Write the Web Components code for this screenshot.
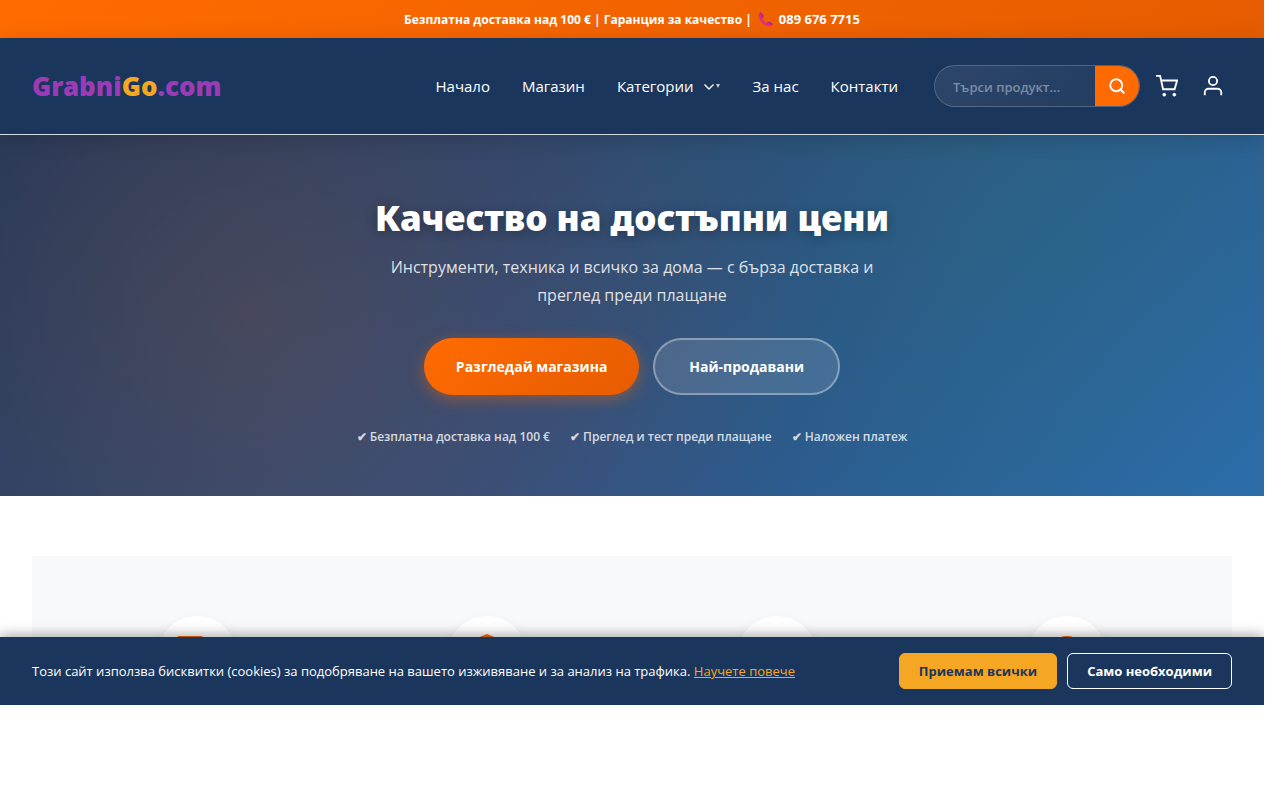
<!DOCTYPE html>
<html lang="bg">
<head>
<meta charset="UTF-8">
<meta name="viewport" content="width=device-width, initial-scale=1.0">
<title>GrabniGo.com</title>
<style>
    :root {
        --navy: #1b365d;
        --orange: #ff6b00;
        --orange-dark: #e65c00;
        --gold: #f5a623;
        --purple: #9b3bb5;
    }

    body {
        margin: 0 16px 0 0;
        background: #fff;
        color: #fff;
        font-family: "Open Sans", "Noto Sans", sans-serif;
        font-size: 15px;
    }
</style>
</head>
<body>

<top-bar>Безплатна доставка над 100 € | Гаранция за качество |</top-bar>

<site-header>
    <nav-link href="#home">Начало</nav-link>
    <nav-link href="#shop">Магазин</nav-link>
    <nav-link href="#categories" dropdown>Категории</nav-link>
    <nav-link href="#about">За нас</nav-link>
    <nav-link href="#contacts">Контакти</nav-link>
</site-header>

<main>
    <hero-banner>
        <span slot="title">Качество на достъпни цени</span>
        <span slot="text">Инструменти, техника и всичко за дома — с бърза доставка и преглед преди плащане</span>
        <hero-button slot="actions" primary>Разгледай магазина</hero-button>
        <hero-button slot="actions">Най-продавани</hero-button>
        <trust-item slot="trust">Безплатна доставка над 100 €</trust-item>
        <trust-item slot="trust">Преглед и тест преди плащане</trust-item>
        <trust-item slot="trust">Наложен платеж</trust-item>
    </hero-banner>

    <feature-list>
        <feature-icon name="truck"></feature-icon>
        <feature-icon name="shield"></feature-icon>
        <feature-icon name="card"></feature-icon>
        <feature-icon name="headset"></feature-icon>
    </feature-list>
</main>

<cookie-banner>Този сайт използва бисквитки (cookies) за подобряване на вашето изживяване и за анализ на трафика.</cookie-banner>

<script>
class TopBar extends HTMLElement {

    constructor() {
        super();
        this.attachShadow({ mode: 'open' }).innerHTML = `
            <style>
                :host {
                    display: flex;
                    justify-content: center;
                    align-items: center;
                    gap: 6px;
                    height: 38px;
                    background: linear-gradient(135deg, var(--orange), var(--orange-dark));
                    font-size: 12px;
                    font-weight: 700;
                }

                a {
                    display: flex;
                    align-items: center;
                    gap: 6px;
                    color: inherit;
                    font-size: 13px;
                    text-decoration: none;
                }

                svg {
                    width: 15px;
                    height: 15px;
                }
            </style>

            <span><slot></slot></span>
            <a href="tel:0896767715">
                <svg viewBox="0 0 16 16" aria-hidden="true">
                    <path d="M1.500 1C.2 3 .6 6.500 3 9.800c2.600 3.600 6.200 5.600 9.400 5.400 1.700-.1 2.900-1.100 3.200-2.400l-3-2.300-2.600.4-.8 1C7.500 11 5.500 8.800 4.600 6.800l1-.9.1-2.500L2.800.6z" fill="#d92f8a"/>
                    <path d="M1.500 1 2.800.6l2.900 2.800-.1 2.500-1 .9-1-.8.300-2zM9.200 11.900l.8-1 2.600-.4 3 2.300-.6 1.200-2.800-1.700z" fill="#b5267b"/>
                </svg>
                089 676 7715
            </a>
        `;
    }
}

class NavLink extends HTMLElement {

    constructor() {
        super();
        this.attachShadow({ mode: 'open' });
    }

    connectedCallback() {
        const arrow = this.hasAttribute('dropdown') ? `
            <svg viewBox="0 0 18 12" aria-hidden="true">
                <path d="M1.500 4.500 6 9l4.500-4.500" fill="none" stroke="#fff" stroke-width="1.400"/>
                <path d="M13 4h4l-2 4z" fill="#c3cbd6"/>
            </svg>` : '';

        this.shadowRoot.innerHTML = `
            <style>
                :host {
                    display: block;
                }

                a {
                    display: flex;
                    align-items: center;
                    gap: 9px;
                    color: #fff;
                    text-decoration: none;
                    white-space: nowrap;
                }

                svg {
                    width: 18px;
                    height: 12px;
                }
            </style>

            <a href="${this.getAttribute('href')}"><slot></slot>${arrow}</a>
        `;
    }
}

class SearchBox extends HTMLElement {

    constructor() {
        super();
        this.attachShadow({ mode: 'open' }).innerHTML = `
            <style>
                :host {
                    display: block;
                }

                form {
                    display: flex;
                    box-sizing: border-box;
                    width: 206px;
                    height: 42px;
                    margin: 0;
                    overflow: hidden;
                    border: 1px solid rgba(255,255,255,.2);
                    border-radius: 21px;
                    background: linear-gradient(135deg, rgba(255,255,255,.08), rgba(255,255,255,.03));
                }

                input {
                    flex: 1;
                    min-width: 0;
                    padding: 2px 0 0 18px;
                    border: 0;
                    outline: 0;
                    background: none;
                    color: #fff;
                    font: 600 13px "Open Sans", "Noto Sans", sans-serif;
                }

                input::placeholder {
                    color: #7c8da7;
                    opacity: 1;
                }

                button {
                    display: flex;
                    align-items: center;
                    justify-content: center;
                    width: 44px;
                    padding: 0;
                    border: 0;
                    background: var(--orange);
                    color: #fff;
                }
            </style>

            <form role="search">
                <input type="search" placeholder="Търси продукт..." aria-label="Търси продукт">
                <button type="button" aria-label="Търси">
                    <svg width="18" height="18" viewBox="0 0 24 24" fill="none" stroke="currentColor" stroke-width="2.500" stroke-linecap="round">
                        <circle cx="11" cy="11" r="8"/>
                        <path d="m21 21-4.300-4.300"/>
                    </svg>
                </button>
            </form>
        `;
    }
}

class SiteHeader extends HTMLElement {

    constructor() {
        super();
        this.attachShadow({ mode: 'open' }).innerHTML = `
            <style>
                :host {
                    display: block;
                    position: relative;
                    z-index: 1;
                    background: var(--navy);
                    border-bottom: 1px solid #d5d9e0;
                    box-shadow: 0 4px 20px rgba(0,0,0,.15);
                }

                header {
                    display: flex;
                    align-items: center;
                    height: 96px;
                    padding: 0 40px 0 32px;
                }

                .logo {
                    margin-right: auto;
                    color: var(--purple);
                    font-family: "Noto Sans", "Open Sans", sans-serif;
                    font-size: 26px;
                    font-weight: 900;
                    text-decoration: none;
                }

                .logo span {
                    color: var(--gold);
                }

                nav {
                    display: flex;
                    gap: 32px;
                    margin-right: 36px;
                }

                .icon {
                    display: flex;
                    margin-left: 16px;
                    color: #fff;
                }

                .icon + .icon {
                    margin-left: 24px;
                }
            </style>

            <header>
                <a class="logo" href="#home">Grabni<span>Go</span>.com</a>
                <nav><slot></slot></nav>
                <search-box></search-box>
                <a class="icon" href="#cart" aria-label="Количка">
                    <svg width="22" height="22" viewBox="0 0 24 24" fill="none" stroke="currentColor" stroke-width="2">
                        <path d="M0 1h4.500l3.200 14.500h12.600L23 6H6"/>
                        <circle cx="9" cy="21.500" r="1.500" fill="currentColor" stroke-width="1"/>
                        <circle cx="20" cy="21.500" r="1.500" fill="currentColor" stroke-width="1"/>
                    </svg>
                </a>
                <a class="icon" href="#account" aria-label="Профил">
                    <svg width="22" height="22" viewBox="0 0 24 24" fill="none" stroke="currentColor" stroke-width="2">
                        <path d="M21 22v-3a4 4 0 0 0-4-4H7a4 4 0 0 0-4 4v3"/>
                        <circle cx="12" cy="6.500" r="4.500"/>
                    </svg>
                </a>
            </header>
        `;
    }
}

class HeroBanner extends HTMLElement {

    constructor() {
        super();
        this.attachShadow({ mode: 'open' }).innerHTML = `
            <style>
                :host {
                    display: block;
                    background:
                        radial-gradient(circle at 20% 50%, rgba(255,107,0,.16), transparent 55%),
                        radial-gradient(circle at 80% 20%, rgba(46,125,110,.28), transparent 50%),
                        linear-gradient(135deg, #1b365d 0%, #2b4c7e 50%, #2b6cb0 100%);
                }

                section {
                    display: flex;
                    flex-direction: column;
                    align-items: center;
                    padding: 60px 24px 49px;
                    text-align: center;
                }

                h1 {
                    margin: 0 0 12px;
                    font-family: "Noto Sans", "Open Sans", sans-serif;
                    font-size: 35px;
                    line-height: 46px;
                    font-weight: 900;
                    text-shadow: 0 2px 12px rgba(0,0,0,.3);
                }

                p {
                    max-width: 520px;
                    margin: 0 0 29px;
                    color: rgba(255,255,255,.85);
                    font-size: 16px;
                    line-height: 28px;
                }

                .actions {
                    display: flex;
                    flex-wrap: wrap;
                    justify-content: center;
                    gap: 14px;
                    margin-bottom: 31px;
                }

                .trust {
                    display: flex;
                    flex-wrap: wrap;
                    justify-content: center;
                    gap: 20px;
                }
            </style>

            <section>
                <h1><slot name="title"></slot></h1>
                <p><slot name="text"></slot></p>
                <div class="actions"><slot name="actions"></slot></div>
                <div class="trust"><slot name="trust"></slot></div>
            </section>
        `;
    }
}

class HeroButton extends HTMLElement {

    constructor() {
        super();
        this.attachShadow({ mode: 'open' }).innerHTML = `
            <style>
                :host {
                    display: block;
                }

                button {
                    height: 57px;
                    padding: 0 34px;
                    border: 2px solid rgba(255,255,255,.35);
                    border-radius: 29px;
                    background: rgba(255,255,255,.12);
                    color: #fff;
                    font-family: inherit;
                    font-size: 14px;
                    font-weight: 700;
                    cursor: pointer;
                }

                :host([primary]) button {
                    padding: 0 32px;
                    border: 0;
                    background: linear-gradient(135deg, var(--orange), var(--orange-dark));
                    box-shadow: 0 4px 16px rgba(255,107,0,.4);
                }
            </style>

            <button type="button"><slot></slot></button>
        `;
    }
}

class TrustItem extends HTMLElement {

    constructor() {
        super();
        this.attachShadow({ mode: 'open' }).innerHTML = `
            <style>
                :host {
                    display: block;
                    color: rgba(255,255,255,.8);
                    font-size: 12px;
                    line-height: 21px;
                    font-weight: 600;
                }
            </style>

            ✔ <slot></slot>
        `;
    }
}

class FeatureList extends HTMLElement {

    constructor() {
        super();
        this.attachShadow({ mode: 'open' }).innerHTML = `
            <style>
                :host {
                    display: grid;
                    grid-template-columns: repeat(4, 1fr);
                    gap: 40px;
                    justify-items: center;
                    margin: 60px 32px 0;
                    padding: 60px 40px 0;
                    background: #f8f9fb;
                }
            </style>

            <slot></slot>
        `;
    }
}

const featureIcons = {
    truck: '<path d="M2 2h22a2 2 0 0 1 2 2v5h6l8 9v14H0V4a2 2 0 0 1 2-2z"/><circle cx="10" cy="33" r="5"/><circle cx="31" cy="33" r="5"/>',
    shield: '<path d="M20 0l17 7c0 16-5 28-17 35C8 35 3 23 3 7z"/>',
    card: '<rect x="0" y="7" width="40" height="30" rx="4"/>',
    headset: '<path d="M20 2c10 0 18 8 18 18v12h-8V20h4a14 14 0 0 0-28 0h4v12H2V20C2 10 10 2 20 2z"/>'
};

class FeatureIcon extends HTMLElement {

    constructor() {
        super();
        this.attachShadow({ mode: 'open' });
    }

    connectedCallback() {
        this.shadowRoot.innerHTML = `
            <style>
                :host {
                    display: flex;
                    align-items: center;
                    justify-content: center;
                    width: 80px;
                    height: 80px;
                    border-radius: 50%;
                    background: #fff;
                    box-shadow: 0 4px 15px rgba(0,0,0,.05);
                    color: var(--orange);
                }
            </style>

            <svg width="40" height="44" viewBox="0 0 40 44" fill="currentColor" aria-hidden="true">
                ${featureIcons[this.getAttribute('name')]}
            </svg>
        `;
    }
}

class CookieBanner extends HTMLElement {

    constructor() {
        super();
        this.attachShadow({ mode: 'open' }).innerHTML = `
            <style>
                :host {
                    display: flex;
                    align-items: center;
                    justify-content: space-between;
                    gap: 20px;
                    position: relative;
                    margin-top: -59px;
                    padding: 16px 32px;
                    background: var(--navy);
                    box-shadow: 0 -2px 12px rgba(0,0,0,.35);
                    font-size: 13px;
                }

                p {
                    margin: 0;
                }

                a {
                    color: var(--gold);
                }

                .buttons {
                    display: flex;
                    gap: 10px;
                }

                button {
                    height: 36px;
                    padding: 0 19px;
                    border: 1px solid #fff;
                    border-radius: 6px;
                    background: transparent;
                    color: #fff;
                    font-family: inherit;
                    font-size: 13px;
                    font-weight: 700;
                    white-space: nowrap;
                    cursor: pointer;
                }

                .accept {
                    border-color: var(--gold);
                    background: var(--gold);
                    color: var(--navy);
                }
            </style>

            <p><slot></slot> <a href="#cookies">Научете повече</a></p>
            <div class="buttons">
                <button type="button" class="accept">Приемам всички</button>
                <button type="button">Само необходими</button>
            </div>
        `;
    }
}

customElements.define('top-bar', TopBar);
customElements.define('nav-link', NavLink);
customElements.define('search-box', SearchBox);
customElements.define('site-header', SiteHeader);
customElements.define('hero-banner', HeroBanner);
customElements.define('hero-button', HeroButton);
customElements.define('trust-item', TrustItem);
customElements.define('feature-list', FeatureList);
customElements.define('feature-icon', FeatureIcon);
customElements.define('cookie-banner', CookieBanner);
</script>
</body>
</html>
